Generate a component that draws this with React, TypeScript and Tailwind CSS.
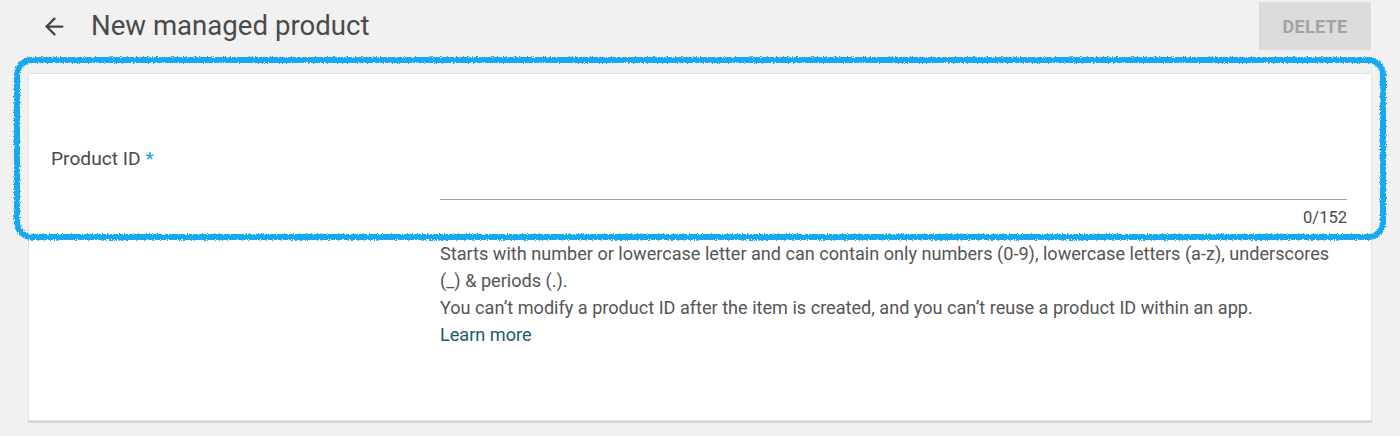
import { ArrowLeft } from 'lucide-react';

function Highlight() {
  return (
    <svg
      className="absolute left-[11px] top-[54px] pointer-events-none"
      width="1378"
      height="190"
      viewBox="0 0 1378 190"
    >
      <defs>
        <filter id="rough" x="-2%" y="-10%" width="104%" height="120%">
          <feTurbulence type="fractalNoise" baseFrequency="0.8" numOctaves="2" seed="5" result="noise" />
          <feDisplacementMap in="SourceGraphic" in2="noise" scale="4" xChannelSelector="R" yChannelSelector="G" />
        </filter>
      </defs>
      <rect
        x="6"
        y="6"
        width="1366"
        height="177"
        rx="15"
        fill="none"
        stroke="#17a9ef"
        strokeWidth="6"
        filter="url(#rough)"
      />
    </svg>
  );
}

export default function App() {
  return (
    <div className="relative w-[1400px] h-[436px] bg-[#f1f1f1] px-[28px] font-['Roboto',sans-serif] overflow-hidden">
      {/* Header */}
      <div className="flex items-start justify-between">
        <div className="flex items-center h-[52px]">
          <ArrowLeft className="ml-[13px] text-[#444]" size={27} strokeWidth={2} />
          <h1 className="ml-[23px] text-[27.6px] leading-[32px] text-[#4a4a4a]">New managed product</h1>
        </div>
        <button
          disabled
          className="mt-[2px] mr-[1px] w-[112px] h-[48px] bg-[#dcdcdc] text-[#a3a3a3] text-[18px] font-bold tracking-[0.3px]"
        >
          DELETE
        </button>
      </div>

      {/* Card */}
      <div className="mt-[21px] h-[348px] bg-white border border-[#e3e3e3] shadow-[0_2px_0_#d6d6d6] flex">
        <div className="w-[411px] pl-[22px] pt-[72px] shrink-0">
          <span className="text-[19.2px] leading-[26px] text-[#4a4a4a]">
            Product ID <span className="text-[#1e9be0]">*</span>
          </span>
        </div>
        <div className="flex-1 pr-[24px]">
          <div className="h-[126px] border-b border-[#a0a0a0]" />
          <div className="mt-[8px] text-right text-[16.5px] leading-[20px] text-[#4a4a4a]">0/152</div>
          <div className="mt-[12px] text-[18.1px] leading-[27px] text-[#555]">
            <p>
              Starts with number or lowercase letter and can contain only numbers (0-9), lowercase letters (a-z), underscores
              (_) &amp; periods (.).
            </p>
            <p>You can’t modify a product ID after the item is created, and you can’t reuse a product ID within an app.</p>
            <a className="text-[#1d5a6e]" href="#">Learn more</a>
          </div>
        </div>
      </div>

      <Highlight />
    </div>
  );
}
